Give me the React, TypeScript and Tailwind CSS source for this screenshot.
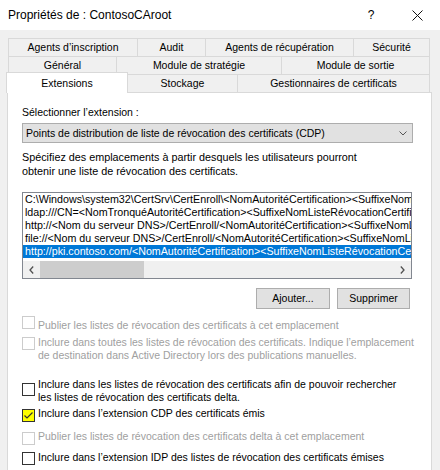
import React from "react";

type Row = {
  lines: string[];
  disabled?: boolean;
  checked?: boolean;
  mt: string;
  boxMt: string;
};

function CheckRow({ lines, disabled, checked, mt, boxMt }: Row) {
  return (
    <div className={`flex items-start ${mt}`}>
      <div className="h-[13px] w-[13px] shrink-0 flex flex-col overflow-visible">
        <div
          className={`w-[13px] h-[13px] shrink-0 border flex items-center justify-center ${boxMt} ${
            disabled ? "border-[#cccccc] bg-white" : checked ? "border-[#333333] bg-[#ffff00]" : "border-[#333333] bg-white"
          }`}
        >
          {checked && (
            <svg width="11" height="11" viewBox="0 0 11 11">
              <path d="M1.5 5.5 L4 8 L9.5 2.5" fill="none" stroke="#333333" strokeWidth="1.2" />
            </svg>
          )}
        </div>
      </div>
      <div className={`ml-[3px] ${disabled ? "text-[#a0a0a0]" : "text-black"}`}>
        {lines.map((l, i) => (
          <div key={i} className="whitespace-nowrap">
            {l}
          </div>
        ))}
      </div>
    </div>
  );
}

function Tab({ label, w, last }: { label: string; w: string; last?: boolean }) {
  return (
    <div
      className={`${w} h-full flex items-center justify-center border-t border-l border-[#d9d9d9] bg-[#f0f0f0] whitespace-nowrap ${
        last ? "border-r" : ""
      }`}
    >
      {label}
    </div>
  );
}

const listLines = [
  "C:\\Windows\\system32\\CertSrv\\CertEnroll\\<NomAutoritéCertification><SuffixeNomListeRévocationCertificats><DeltaListeRévocationCertificatsAutorisée>.crl",
  "ldap:///CN=<NomTronquéAutoritéCertification><SuffixeNomListeRévocationCertificats>,CN=<NomServeurCourt>,CN=CDP,CN=Public Key Services,CN=Services,<ConteneurConfiguration>",
  "http://<Nom du serveur DNS>/CertEnroll/<NomAutoritéCertification><SuffixeNomListeRévocationCertificats><DeltaListeRévocationCertificatsAutorisée>.crl",
  "file://<Nom du serveur DNS>/CertEnroll/<NomAutoritéCertification><SuffixeNomListeRévocationCertificats><DeltaListeRévocationCertificatsAutorisée>.crl",
  "http://pki.contoso.com/<NomAutoritéCertification><SuffixeNomListeRévocationCertificats>.crl",
];

export default function App() {
  return (
    <div className="w-[440px] h-[470px] overflow-hidden bg-[#f0f0f0] font-['Liberation_Sans',Arial,sans-serif] text-[10.5px] leading-[13px] text-black">
      {/* Title bar */}
      <div className="h-[30px] bg-white flex items-center pl-[8px]">
        <span className="text-[12px] leading-[16px]">Propriétés de : ContosoCAroot</span>
        <div className="ml-auto flex items-center h-full">
          <div className="w-[46px] h-full flex items-center justify-center text-[12px]">?</div>
          <div className="w-[46px] h-full flex items-center justify-center">
            <svg width="11" height="11" viewBox="0 0 11 11">
              <path d="M0.5 0.5 L10.5 10.5 M10.5 0.5 L0.5 10.5" stroke="#111111" strokeWidth="1" fill="none" />
            </svg>
          </div>
        </div>
      </div>

      {/* Tabs */}
      <div className="mt-[8px] ml-[8px] flex flex-col">
        <div className="flex h-[18px]">
          <Tab label="Agents d’inscription" w="w-[129px]" />
          <Tab label="Audit" w="w-[68px]" />
          <Tab label="Agents de récupération" w="w-[148px]" />
          <Tab label="Sécurité" w="w-[77px]" last />
        </div>
        <div className="flex h-[18px]">
          <Tab label="Général" w="w-[108px]" />
          <Tab label="Module de stratégie" w="w-[165px]" />
          <Tab label="Module de sortie" w="w-[149px]" last />
        </div>
        <div className="flex h-[18px] items-end">
          <div className="relative z-10 -ml-[2px] -mb-px w-[122px] h-[21px] bg-white border-t border-l border-r border-[#d9d9d9] flex items-center justify-center">
            Extensions
          </div>
          <div className="w-[110px] h-[18px] flex items-center justify-center border-t border-r border-[#d9d9d9]">
            Stockage
          </div>
          <div className="w-[192px] h-[18px] flex items-center justify-center border-t border-r border-[#d9d9d9]">
            Gestionnaires de certificats
          </div>
        </div>
      </div>

      {/* Panel */}
      <div className="ml-[7px] w-[425px] h-[400px] bg-white border border-[#d9d9d9] pl-[14px] pt-[13px]">
        <div>Sélectionner l’extension :</div>
        <div className="mt-[4px] w-[391px] h-[20px] bg-[#e1e1e1] border border-[#adadad] flex items-center pl-[3px] pr-[5px]">
          <span className="whitespace-nowrap">Points de distribution de liste de révocation des certificats (CDP)</span>
          <svg className="ml-auto" width="8" height="5" viewBox="0 0 8 5">
            <path d="M0.5 0.5 L4 4 L7.5 0.5" fill="none" stroke="#555555" strokeWidth="1" />
          </svg>
        </div>
        <div className="mt-[7px] leading-[14px] text-[10.8px]">
          Spécifiez des emplacements à partir desquels les utilisateurs pourront
          <br />
          obtenir une liste de révocation des certificats.
        </div>

        {/* List box */}
        <div className="mt-[14px] w-[390px] h-[87px] border border-[#828790] flex flex-col bg-white">
          <div className="h-[68px] overflow-hidden text-[10.7px]">
            {listLines.map((l, i) => (
              <div
                key={i}
                className={`h-[13px] pl-[2px] whitespace-nowrap overflow-hidden ${
                  i === listLines.length - 1 ? "bg-[#0078d7] text-white" : ""
                }`}
              >
                {l}
              </div>
            ))}
          </div>
          <div className="h-[17px] bg-[#f0f0f0] flex items-stretch">
            <div className="w-[17px] flex items-center justify-center">
              <svg width="5" height="8" viewBox="0 0 5 8">
                <path d="M4.2 0.5 L1 4 L4.2 7.5" fill="none" stroke="#505050" strokeWidth="1.3" />
              </svg>
            </div>
            <div className="w-[104px] bg-[#cdcdcd]" />
            <div className="ml-auto w-[17px] flex items-center justify-center">
              <svg width="5" height="8" viewBox="0 0 5 8">
                <path d="M0.8 0.5 L4 4 L0.8 7.5" fill="none" stroke="#505050" strokeWidth="1.3" />
              </svg>
            </div>
          </div>
        </div>

        {/* Buttons */}
        <div className="mt-[9px] w-[388px] flex justify-end gap-[7px]">
          <div className="w-[74px] h-[21px] bg-[#e1e1e1] border border-[#adadad] flex items-center justify-center">
            Ajouter...
          </div>
          <div className="w-[73px] h-[21px] bg-[#e1e1e1] border border-[#adadad] flex items-center justify-center">
            Supprimer
          </div>
        </div>

        {/* Checkboxes */}
        <CheckRow
          disabled
          mt="mt-[10px]"
          boxMt="-mt-[3px]"
          lines={["Publier les listes de révocation des certificats à cet emplacement"]}
        />
        <CheckRow
          disabled
          mt="mt-[4px]"
          boxMt="mt-[1px]"
          lines={[
            "Inclure dans toutes les listes de révocation des certificats. Indique l’emplacement",
            "de destination dans Active Directory lors des publications manuelles.",
          ]}
        />
        <CheckRow
          mt="mt-[16px]"
          boxMt="mt-[5px]"
          lines={[
            "Inclure dans les listes de révocation des certificats afin de pouvoir rechercher",
            "les listes de révocation des certificats delta.",
          ]}
        />
        <CheckRow
          checked
          mt="mt-[3px]"
          boxMt="mt-[2px]"
          lines={["Inclure dans l’extension CDP des certificats émis"]}
        />
        <CheckRow
          disabled
          mt="mt-[10px]"
          boxMt="mt-[2px]"
          lines={["Publier les listes de révocation des certificats delta à cet emplacement"]}
        />
        <CheckRow
          mt="mt-[8px]"
          boxMt="mt-[1px]"
          lines={["Inclure dans l’extension IDP des listes de révocation des certificats émises"]}
        />
      </div>
    </div>
  );
}
